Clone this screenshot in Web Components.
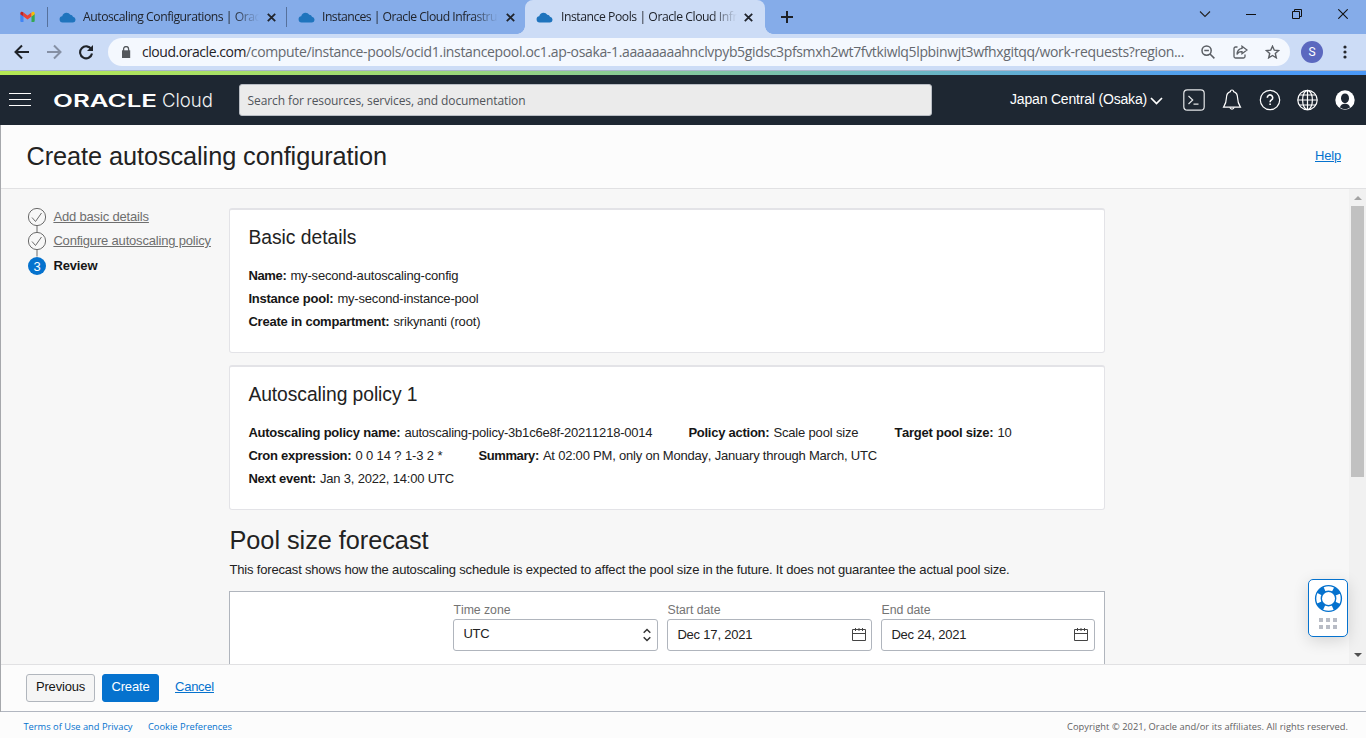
<!DOCTYPE html>
<html lang="en">
<head>
<meta charset="utf-8">
<title>Instance Pools | Oracle Cloud Infrastructure</title>
<style>
html,body{margin:0;height:100%;overflow:hidden}
body{font-family:"Liberation Sans",Arial,sans-serif;font-size:13px;color:#222}
</style>
</head>
<body>
<app-window></app-window>
<script>
const define = (name, html, ready) => {
  const template = document.createElement('template');
  template.innerHTML = html;
  customElements.define(name, class extends HTMLElement {
    connectedCallback() {
      if (this.shadowRoot) return;
      this.attachShadow({ mode: 'open' }).append(template.content.cloneNode(true));
      if (ready) ready.call(this, this.shadowRoot);
    }
  });
};

/* A single line of text, tracked so that it fills the width given in "w". */
define('text-run', `<style>
:host{display:inline-block;white-space:pre;flex:none}
span{display:inline-block}
:host([underline]) span{text-decoration:underline;text-underline-offset:1px}
</style><span><slot></slot></span>`, function (root) {
  const span = root.querySelector('span');
  const w = +this.getAttribute('w');
  if (!w) return;
  const n = this.textContent.length;
  const natural = span.getBoundingClientRect().width;
  span.style.letterSpacing = ((w - natural) / n) + 'px';
  span.style.fontKerning = 'none';
  span.style.fontVariantLigatures = 'none';
  const again = span.getBoundingClientRect().width;
  span.style.letterSpacing = ((w - natural) / n + (w - again) / n) + 'px';
});

define('cloud-icon', `<style>:host{display:block;width:17px;height:12px;flex:none}svg{display:block}</style>
<svg width="17" height="12" viewBox="0 0 17 12"><path fill="#1f74bd" d="M3.6 10.5A3.2 3.2 0 0 1 .6 7.4 3 3 0 0 1 3.2 4.2 4.6 4.6 0 0 1 7.6.7a4.6 4.6 0 0 1 3.7 2 3 3 0 0 1 2.7 2 3 3 0 0 1 2.5 2.9 2.9 2.9 0 0 1-2.8 2.9z"/></svg>`);

define('browser-tab', `<style>
:host{display:flex;height:34px;align-items:center;box-sizing:border-box;flex:none;font:12.2px/34px "Open Sans","Noto Sans",sans-serif;color:#20242c;padding-left:10.5px}
:host([active]){background:#ccdcf6;border-radius:8px 8px 0 0;position:relative;padding-left:11px}
:host([active])::before,:host([active])::after{content:"";position:absolute;bottom:0;width:8px;height:8px}
:host([active])::before{left:-8px;background:radial-gradient(circle at 0 0,transparent 7.5px,#ccdcf6 8px)}
:host([active])::after{right:-8px;background:radial-gradient(circle at 100% 0,transparent 7.5px,#ccdcf6 8px)}
.t{width:177px;overflow:hidden;margin-left:7.5px;height:34px;-webkit-mask-image:linear-gradient(90deg,#000 150px,transparent 176px);mask-image:linear-gradient(90deg,#000 150px,transparent 176px)}
:host([active]) .t{margin-left:8px}
:host([active]) .x{margin-left:6px}
.x{margin-left:6.500px;display:block}
cloud-icon{margin-top:1px}
</style><cloud-icon></cloud-icon><div class="t"><slot></slot></div>
<svg class="x" width="9" height="9" viewBox="0 0 9 9"><path d="M.8.8l7.4 7.4M8.2.8L.8 8.2" stroke="#20242c" stroke-width="1.8"/></svg>`);

define('tab-strip', `<style>
:host{display:flex;height:34px;background:#85ace9;align-items:center;flex:none}
.gm{margin:0 12px 0 20px;width:15px}
.sep{width:1px;height:20px;background:#56719c;flex:none}
.sp{flex:1}
svg{display:block;flex:none}
browser-tab:nth-of-type(1){width:238px}
browser-tab:nth-of-type(2){width:238px}
browser-tab:nth-of-type(3){width:240px}
.ctl{display:flex;align-items:center;margin-top:-6px;padding-right:18px}
</style>
<svg class="gm" width="15" height="12" viewBox="0 0 15 12"><path fill="#4285f4" d="M.3 2.8l3.2 2.4V11H1.4A1.1 1.1 0 0 1 .3 9.9z"/><path fill="#34a853" d="M14.7 2.8l-3.2 2.4V11h2.1a1.1 1.1 0 0 0 1.1-1.1z"/><path fill="#ea4335" d="M3.5 1.5l4 3 4-3v4l-4 3-4-3z"/><path fill="#c5221f" d="M.3 2.6C.3.6 2.2.3 3.5 1.5v4L.3 3.2z"/><path fill="#fbbc04" d="M14.7 2.6c0-2-1.9-2.3-3.2-1.1v4l3.2-2.3z"/></svg>
<div class="sep"></div>
<browser-tab><text-run w="177">Autoscaling Configurations | Orac</text-run></browser-tab>
<div class="sep"></div>
<browser-tab><text-run w="175">Instances | Oracle Cloud Infrastru</text-run></browser-tab>
<browser-tab active><text-run w="176">Instance Pools | Oracle Cloud Infr</text-run></browser-tab>
<svg style="margin-left:16px" width="12" height="12" viewBox="0 0 12 12"><path d="M6 0v12M0 6h12" stroke="#1c2026" stroke-width="2"/></svg>
<div class="sp"></div>
<div class="ctl">
<svg width="12" height="12" viewBox="0 0 12 12" style="margin-right:35px"><path d="M1 3.5l5 5 5-5" fill="none" stroke="#222" stroke-width="1.1"/></svg>
<svg width="10" height="10" viewBox="0 0 10 10" style="margin-right:36px"><path d="M0 5.5h10" stroke="#111"/></svg>
<svg width="10" height="10" viewBox="0 0 10 10" style="margin-right:36px"><path d="M.5 2.5h7v7h-7zM2.500 2.500v-2h7v7h-2" fill="none" stroke="#111"/></svg>
<svg width="10" height="10" viewBox="0 0 10 10"><path d="M.3.3l9.400 9.400M9.700.3L.3 9.700" stroke="#111" stroke-width="1.1"/></svg>
</div>`);

define('address-bar', `<style>
:host{display:flex;background:#ccdcf6;align-items:center;flex:none;border-bottom:1px solid #a9b4cb;box-sizing:border-box;height:37px}
svg{display:block;flex:none}
.pill{margin-left:14px;width:1182px;height:28px;border-radius:14px;background:#f4f8fe;display:flex;align-items:center;font:14px/28px "Open Sans","Noto Sans",sans-serif;color:#65696f;box-sizing:border-box;padding-left:13px}
.pill b{font-weight:400;color:#1f2227}
.av{width:22px;height:22px;border-radius:50%;background:#5b68bf;color:#fff;font:12px/22px Roboto,sans-serif;text-align:center;margin-left:11px}
</style>
<svg style="margin-left:14px" width="16" height="16" viewBox="0 0 16 16"><path d="M15 8H2M8 1.500L1.500 8 8 14.500" fill="none" stroke="#1f2329" stroke-width="2"/></svg>
<svg style="margin-left:16px" width="16" height="16" viewBox="0 0 16 16"><path d="M1 8h13M8 1.500L14.500 8 8 14.500" fill="none" stroke="#8590a4" stroke-width="2"/></svg>
<svg style="margin-left:16px" width="16" height="16" viewBox="0 0 16 16"><path d="M13.300 5.300A6 6 0 1 0 14 9.500" fill="none" stroke="#1f2329" stroke-width="2.100"/><path d="M15 1v6H9z" fill="#1f2329"/></svg>
<div class="pill">
<svg width="10" height="12" viewBox="0 0 10 12" style="margin:0 11px 1px 0"><path d="M1 4.300h8.200V12H1z" fill="#54585d"/><path d="M2.600 5V3a2.500 2.500 0 0 1 5 0v2" fill="none" stroke="#54585d" stroke-width="1.300"/></svg>
<text-run w="104"><b>cloud.oracle.com</b></text-run><text-run w="938">/compute/instance-pools/ocid1.instancepool.oc1.ap-osaka-1.aaaaaaaahnclvpyb5gidsc3pfsmxh2wt7fvtkiwlq5lpbinwjt3wfhxgitqq/work-requests?region...</text-run>
<svg width="14" height="14" viewBox="0 0 14 14" style="margin-left:17px"><g fill="none" stroke="#5a5e64" stroke-width="1.500"><circle cx="5.600" cy="5.600" r="4.600"/><path d="M9 9l4.400 4.400M3.300 5.600h4.600"/></g></svg>
<svg width="15" height="14" viewBox="0 0 15 14" style="margin-left:17.500px"><g fill="none" stroke="#5a5e64" stroke-width="1.300"><path d="M4.500 2H2.500A1.500 1.500 0 0 0 1 3.500v8A1.500 1.500 0 0 0 2.500 13h8a1.500 1.500 0 0 0 1.500-1.500V9.500"/><path d="M9 1.200L14 5 9 8.800V6.700C6.500 6.500 5 7.500 4 9.500 4.100 6.500 6 3.800 9 3.400z"/></g></svg>
<svg width="15" height="14" viewBox="0 0 15 14" style="margin-left:17px"><path d="M7.500 1.200l1.800 4 4.300.4-3.300 2.900 1 4.300-3.800-2.300-3.800 2.300 1-4.300L1.400 5.600l4.300-.4z" fill="none" stroke="#5a5e64" stroke-width="1.400"/></svg>
</div>
<div class="av">S</div>
<svg width="4" height="14" viewBox="0 0 4 14" style="margin-left:20px"><g fill="#25282d"><circle cx="2" cy="2" r="1.600"/><circle cx="2" cy="7" r="1.600"/><circle cx="2" cy="12" r="1.600"/></g></svg>`);

define('console-header', `<style>
:host{display:block;flex:none}
.g{height:4px;background:linear-gradient(90deg,#b5e853,#9ad77a 33%,#6fb9be 65%,#4d9cf5 90%,#4a98f7)}
.bar{height:50px;background:#1e2732;display:flex;align-items:center}
svg{display:block;flex:none}
.search{margin-left:26px;width:693px;height:32px;box-sizing:border-box;border:1px solid #b9bdc4;border-radius:3px;background:#ebebeb;font:12px/31px "Open Sans","Noto Sans",sans-serif;color:#50545a;padding-left:7.500px}
.reg{margin-left:78px;margin-top:-2px;color:#fff;font-size:14px;line-height:20px}
</style>
<div class="g"></div>
<div class="bar">
<svg style="margin-left:9px;margin-top:-1px" width="22" height="13" viewBox="0 0 22 13"><path d="M0 .5h22M0 6.500h22M0 12.500h22" stroke="#fff" stroke-width="1"/></svg>
<svg style="margin-left:22px" width="160" height="24" viewBox="0 0 160 24"><text x="0" y="18.700" font-family="Inter,sans-serif" font-weight="600" font-size="17.200" fill="#fff" textLength="104" lengthAdjust="spacingAndGlyphs">ORACLE</text><text x="109" y="18.700" font-family="Inter,sans-serif" font-weight="300" font-size="18.800" fill="#f2f3f4" textLength="51" lengthAdjust="spacingAndGlyphs">Cloud</text></svg>
<div class="search"><text-run w="278">Search for resources, services, and documentation</text-run></div>
<div class="reg"><text-run w="137">Japan Central (Osaka)</text-run></div>
<svg style="margin-left:3px" width="13" height="9" viewBox="0 0 13 9"><path d="M1 2l5.500 5.500L12 2" fill="none" stroke="#fff" stroke-width="1.700"/></svg>
<svg style="margin-left:20px" width="22" height="22" viewBox="0 0 22 22"><g fill="none" stroke="#e4e6e8" stroke-width="1.200"><rect x=".8" y=".8" width="20.400" height="20.400" rx="3.500"/><path d="M5.500 7l4.200 4-4.200 4M10.500 15.200h5"/></g></svg>
<svg style="margin-left:17px" width="20" height="22" viewBox="0 0 20 22"><g fill="none" stroke="#fff" stroke-width="1.200"><path d="M8.400 2.600a1.600 1.600 0 0 1 3.200 0C14.500 3.400 15.600 6 15.600 9c0 4.500 1 6 2.900 9.200h-17C3.400 15 4.400 13.500 4.400 9c0-3 1.100-5.600 4-6.400z"/><path d="M7.800 18.400a2.300 2.300 0 0 0 4.400 0"/></g></svg>
<svg style="margin-left:17px" width="22" height="22" viewBox="0 0 22 22"><circle cx="11" cy="11" r="9.700" fill="none" stroke="#fff" stroke-width="1.200"/><path d="M8.300 8.700a2.700 2.700 0 1 1 4.200 2.200c-1 .7-1.400 1.100-1.400 2.300M11.100 14.500v1.600" fill="none" stroke="#fff" stroke-width="1.600"/></svg>
<svg style="margin-left:16px" width="21" height="22" viewBox="0.500 0 21 22"><g fill="none" stroke="#fff" stroke-width="1.200"><circle cx="11" cy="11" r="9.700"/><ellipse cx="11" cy="11" rx="4.900" ry="9.700"/><path d="M11 1.300v19.400M1.300 11h19.400M2.800 6h16.400M2.800 16h16.400"/></g></svg>
<svg style="margin-left:17px" width="20" height="20" viewBox="0 0 20 20"><circle cx="10" cy="10" r="9.700" fill="#fff"/><ellipse cx="10" cy="8.300" rx="4" ry="4.900" fill="#1e2732"/><path d="M5 17.600c.3-2.500 2-3.800 5-3.800s4.700 1.300 5 3.800a9 9 0 0 1-10 0z" fill="#1e2732"/></svg>
</div>`);

define('page-title', `<style>
:host{display:flex;box-sizing:border-box;height:64px;flex:none;background:#fcfcfc;border-bottom:1px solid #e1e1e3;align-items:center;justify-content:space-between;padding:0 25px 1px 25.500px}
h1{font-size:25.300px;font-weight:400;margin:0;line-height:30px;color:#222}
a{color:#0572ce;font-size:13px;line-height:18px;margin-top:-1px}
</style><h1><text-run w="360.500">Create autoscaling configuration</text-run></h1><a><text-run underline w="26">Help</text-run></a>`);

define('wizard-steps', `<style>
:host{display:block;width:228px;box-sizing:border-box;padding:16px 0 0 26px;flex:none;font-size:13px}
div{display:flex;align-items:center;height:24.500px}
svg{display:block;margin-right:7.400px;overflow:visible;flex:none}
a{color:#6e6e6e;line-height:20px;margin-top:-1px}
b{color:#161616;line-height:20px;margin-top:-1px}
</style>
<div><svg width="19" height="19" viewBox="-.5 .5 19 19"><g fill="none" stroke="#6b6b6b"><circle cx="9.500" cy="9.500" r="8.600"/><path d="M4.500 10l3.500 4 6-8.500M9.500 18v7" stroke-width="1"/></g></svg><a><text-run underline w="95.500">Add basic details</text-run></a></div>
<div><svg width="19" height="19" viewBox="-.5 .5 19 19"><g fill="none" stroke="#6b6b6b"><circle cx="9.500" cy="9.500" r="8.600"/><path d="M4.500 10l3.500 4 6-8.500M9.500 18v7" stroke-width="1"/></g></svg><a><text-run underline w="157.500">Configure autoscaling policy</text-run></a></div>
<div><svg width="19" height="19" viewBox="-.5 .5 19 19"><circle cx="9.500" cy="9.500" r="9" fill="#0572ce"/><text x="9.500" y="14" text-anchor="middle" font-size="13" fill="#fff">3</text></svg><b><text-run w="44">Review</text-run></b></div>`);

define('detail-card', `<style>
:host{display:block;box-sizing:border-box;width:876px;height:145px;border:1px solid #e3e3e7;border-top-width:2px;border-radius:3px;background:#fff;padding:16px 18px 0 18.400px;margin-bottom:12px}
.h{font-size:19.300px;line-height:24px;margin-bottom:14px;color:#222}
</style><div class="h"><slot name="heading"></slot></div><slot></slot>`);

define('detail-row', `<style>
:host{display:flex;height:23px;line-height:23px;gap:36px}
</style><slot></slot>`);

define('detail-item', `<style>
:host{display:flex;gap:4px}
b{color:#161616}
</style><b><slot name="label"></slot></b><slot></slot>`);

define('form-field', `<style>
:host{display:block;box-sizing:border-box}
label{display:block;font-size:12.300px;line-height:18px;color:#747474;margin-bottom:2px;height:16px;padding-left:.5px}
.f{box-sizing:border-box;height:32px;border:1px solid #b0b5bd;border-radius:3px;background:#fff;display:flex;justify-content:space-between;align-items:center;padding:0 4px 0 9.400px;line-height:30px;color:#222}
:host([kind=select]) .f{padding-right:6px}
:host([end]) .f{padding-right:5px}
svg{display:none}
:host([kind=select]) .s,:host([kind=date]) .d{display:block}
:host([kind=select]) .v{margin-top:-3px}
.v{margin-top:-1px}
</style><label><slot name="label"></slot></label><div class="f"><div class="v"><slot></slot></div>
<svg class="s" width="8" height="14" viewBox="0 0 8 14"><path d="M.7 4.800L4 1.500l3.300 3.300M.7 9.200L4 12.500l3.300-3.300" fill="none" stroke="#333" stroke-width="1.500"/></svg>
<svg class="d" width="16" height="16" viewBox="0 0 16 16"><g fill="none" stroke="#444"><path d="M1.500 2.500h13v11h-13zM1.500 6.500h13M4.500 1v3M8 1v3M11.500 1v3"/></g></svg></div>`);

define('forecast-panel', `<style>
:host{display:block;width:876px}
.h{font-size:25.300px;line-height:30px;padding:3px 0 0 .5px;color:#222}
p{margin:6px 0 12px;padding-left:.5px;line-height:18px;color:#222}
.box{box-sizing:border-box;height:160px;border:1px solid #b0b5bd;background:#fff;display:flex;justify-content:flex-end;gap:9px;padding:9px 9px 0}
form-field:nth-child(-n+2){width:205px}
form-field:nth-child(3){width:214px}
</style><div class="h"><text-run w="199">Pool size forecast</text-run></div>
<p><text-run w="780">This forecast shows how the autoscaling schedule is expected to affect the pool size in the future. It does not guarantee the actual pool size.</text-run></p>
<div class="box">
<form-field kind="select"><text-run slot="label" w="57">Time zone</text-run><text-run w="26">UTC</text-run></form-field>
<form-field kind="date"><text-run slot="label" w="53">Start date</text-run><text-run w="75">Dec 17, 2021</text-run></form-field>
<form-field kind="date" end><text-run slot="label" w="49">End date</text-run><text-run w="75">Dec 24, 2021</text-run></form-field>
</div>`);

define('scroll-rail', `<style>
:host{display:flex;flex-direction:column;width:17px;background:#f1f1f1;flex:none;align-items:center;justify-content:space-between}
.top{display:flex;flex-direction:column;align-items:center;padding-top:7px}
.th{width:13px;height:271px;background:#c1c1c1;margin-top:6px}
svg{display:block}
.bt{margin-bottom:7px}
</style><div class="top"><svg width="8" height="4" viewBox="0 0 8 4"><path d="M4 0l4 4H0z" fill="#a3a3a3"/></svg><div class="th"></div></div>
<svg class="bt" width="8" height="4" viewBox="0 0 8 4"><path d="M4 4l4-4H0z" fill="#505050"/></svg>`);

define('support-widget', `<style>
:host{position:absolute;left:1308px;top:579px;width:40px;height:58px;box-sizing:border-box;border:1px solid #0572ce;border-radius:5px;background:#fff;box-shadow:0 4px 16px rgba(0,0,0,.14);display:flex;flex-direction:column;align-items:center}
svg{display:block}
</style>
<svg style="margin-top:4px" width="29" height="29" viewBox="0 0 29 29"><circle cx="14.500" cy="14.500" r="10" fill="none" stroke="#0572ce" stroke-width="6" stroke-dasharray="7 8.708" stroke-dashoffset="-4.354"/><circle cx="14.500" cy="14.500" r="12.900" fill="none" stroke="#0572ce" stroke-width="1.400"/><circle cx="14.500" cy="14.500" r="7.200" fill="#fff" stroke="#0572ce" stroke-width="1.400"/></svg>
<svg style="margin-top:5px" width="18" height="11" viewBox="0 0 18 11"><g fill="#b8bcc5"><path d="M0 0h4v4H0zM7 0h4v4H7zM14 0h4v4h-4zM0 7h4v4H0zM7 7h4v4H7zM14 7h4v4h-4z"/></g></svg>`);

define('action-bar', `<style>
:host{display:flex;box-sizing:border-box;height:48px;border-top:1px solid #e1e1e3;border-bottom:1px solid #b1b6c0;background:#fcfcfc;flex:none;align-items:center;padding-left:25px}
button{font:13px/24px "Liberation Sans",Arial,sans-serif;box-sizing:border-box;height:28px;padding:0 0 2px;border-radius:3px;border:1px solid #b1b6bd;background:#f5f5f5;color:#161616;width:69px}
.p{background:#0572ce;border-color:#0572ce;color:#fff;width:57px;margin:0 16px 0 7px}
a{color:#0572ce;line-height:18px;margin-top:-2px}
</style><button><text-run w="49">Previous</text-run></button><button class="p"><text-run w="38">Create</text-run></button><a><text-run underline w="39">Cancel</text-run></a>`);

define('legal-bar', `<style>
:host{display:flex;height:26px;background:#fcfcfc;flex:none;padding:0 18px 0 23.500px;font:9.300px/29px "Open Sans","Noto Sans",sans-serif;color:#5f6062;overflow:hidden}
a{color:#0572ce;margin-right:15.500px}
.c{margin-left:auto}
</style><a><text-run w="109">Terms of Use and Privacy</text-run></a><a><text-run w="84">Cookie Preferences</text-run></a>
<div class="c"><text-run w="281">Copyright © 2021, Oracle and/or its affiliates. All rights reserved.</text-run></div>`);

define('app-window', `<style>
:host{display:flex;flex-direction:column;width:1366px;height:738px;overflow:hidden;position:relative;background:#fcfcfc}
.frame{display:flex;flex-direction:column;height:587px;flex:none;border-left:1px solid #a6a8ac;box-sizing:border-box}
.body{display:flex;height:475px;background:#f7f7f7;overflow:hidden}
.col{flex:1;padding-top:19px;overflow:hidden}
</style>
<tab-strip></tab-strip><address-bar></address-bar><console-header></console-header>
<div class="frame"><page-title></page-title>
<div class="body"><wizard-steps></wizard-steps><div class="col">
<detail-card><text-run slot="heading" w="108">Basic details</text-run>
<detail-row><detail-item><text-run slot="label" w="38">Name:</text-run><text-run w="168">my-second-autoscaling-config</text-run></detail-item></detail-row>
<detail-row><detail-item><text-run slot="label" w="85">Instance pool:</text-run><text-run w="141">my-second-instance-pool</text-run></detail-item></detail-row>
<detail-row><detail-item><text-run slot="label" w="141">Create in compartment:</text-run><text-run w="87">srikynanti (root)</text-run></detail-item></detail-row>
</detail-card>
<detail-card><text-run slot="heading" w="169">Autoscaling policy 1</text-run>
<detail-row><detail-item><text-run slot="label" w="152">Autoscaling policy name:</text-run><text-run w="248">autoscaling-policy-3b1c6e8f-20211218-0014</text-run></detail-item><detail-item><text-run slot="label" w="81">Policy action:</text-run><text-run w="85">Scale pool size</text-run></detail-item><detail-item><text-run slot="label" w="99">Target pool size:</text-run><text-run w="14">10</text-run></detail-item></detail-row>
<detail-row><detail-item><text-run slot="label" w="103">Cron expression:</text-run><text-run w="87">0 0 14 ? 1-3 2 *</text-run></detail-item><detail-item><text-run slot="label" w="60.500">Summary:</text-run><text-run w="334">At 02:00 PM, only on Monday, January through March, UTC</text-run></detail-item></detail-row>
<detail-row><detail-item><text-run slot="label" w="67.500">Next event:</text-run><text-run w="134">Jan 3, 2022, 14:00 UTC</text-run></detail-item></detail-row>
</detail-card>
<forecast-panel></forecast-panel>
</div><scroll-rail></scroll-rail></div>
<action-bar></action-bar></div>
<legal-bar></legal-bar>
<support-widget></support-widget>`);
</script>
</body>
</html>
